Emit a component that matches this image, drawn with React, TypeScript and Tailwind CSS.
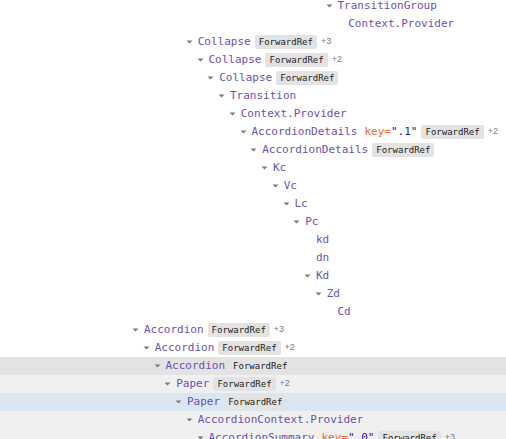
type Row = {
  name: string;
  depth: number;
  arrow?: boolean;
  keyVal?: string;
  badge?: boolean;
  count?: number;
  bg?: string;
};

const ROWS: Row[] = [
  { name: "TransitionGroup", depth: 18, arrow: true },
  { name: "Context.Provider", depth: 19 },
  { name: "Collapse", depth: 5, arrow: true, badge: true, count: 3 },
  { name: "Collapse", depth: 6, arrow: true, badge: true, count: 2 },
  { name: "Collapse", depth: 7, arrow: true, badge: true },
  { name: "Transition", depth: 8, arrow: true },
  { name: "Context.Provider", depth: 9, arrow: true },
  { name: "AccordionDetails", depth: 10, arrow: true, keyVal: ".1", badge: true, count: 2 },
  { name: "AccordionDetails", depth: 11, arrow: true, badge: true },
  { name: "Kc", depth: 12, arrow: true },
  { name: "Vc", depth: 13, arrow: true },
  { name: "Lc", depth: 14, arrow: true },
  { name: "Pc", depth: 15, arrow: true },
  { name: "kd", depth: 16 },
  { name: "dn", depth: 16 },
  { name: "Kd", depth: 16, arrow: true },
  { name: "Zd", depth: 17, arrow: true },
  { name: "Cd", depth: 18 },
  { name: "Accordion", depth: 0, arrow: true, badge: true, count: 3 },
  { name: "Accordion", depth: 1, arrow: true, badge: true, count: 2 },
  { name: "Accordion", depth: 2, arrow: true, badge: true, bg: "bg-[#e3e3e3]" },
  { name: "Paper", depth: 3, arrow: true, badge: true, count: 2, bg: "bg-[#f0f0f0]" },
  { name: "Paper", depth: 4, arrow: true, badge: true, bg: "bg-[#dae6f1]" },
  { name: "AccordionContext.Provider", depth: 5, arrow: true, bg: "bg-[#f0f0f0]" },
  { name: "AccordionSummary", depth: 6, arrow: true, keyVal: ".0", badge: true, count: 3, bg: "bg-[#f0f0f0]" },
];

function Arrow() {
  return (
    <svg width="7" height="4" viewBox="0 0 7 4" className="block">
      <path d="M0.5 0.5 L6.5 0.5 L3.5 3.5 Z" fill="#7a7a7a" />
    </svg>
  );
}

function TreeRow({ row }: { row: Row }) {
  // text starts at 144px for depth 0, 10.75px per level; arrow slot is 13px wide
  const pad = 144 + row.depth * 10.75 - 13;
  return (
    <div
      className={`flex h-[18px] shrink-0 items-center whitespace-nowrap ${row.bg ?? ""}`}
      style={{ paddingLeft: pad }}
    >
      <span className="flex w-[13px] shrink-0 items-center pl-[1px]">
        {row.arrow && <Arrow />}
      </span>
      <span className="text-[#6a51b2]">{row.name}</span>
      {row.keyVal && (
        <span className="ml-[7px]">
          <span className="text-[#ef6632]">key</span>
          <span className="text-[#ef6632]">=</span>
          <span className="text-[#1a1aa6]">"{row.keyVal}"</span>
        </span>
      )}
      {row.badge && (
        <span className="ml-[4px] flex h-[14px] items-center rounded-[2px] bg-[#e3e3e3] px-[4px] text-[9px] leading-none text-[#222]">
          ForwardRef
        </span>
      )}
      {row.count && (
        <span className="ml-[4px] font-['Liberation_Sans',sans-serif] text-[9px] text-[#777d88]">
          +{row.count}
        </span>
      )}
    </div>
  );
}

export default function App() {
  return (
    <div className="h-[439px] w-[506px] overflow-hidden bg-white font-['DejaVu_Sans_Mono',monospace] text-[11px]">
      <div className="mt-[-3px] flex flex-col">
        {ROWS.map((row, i) => (
          <TreeRow key={i} row={row} />
        ))}
      </div>
    </div>
  );
}
